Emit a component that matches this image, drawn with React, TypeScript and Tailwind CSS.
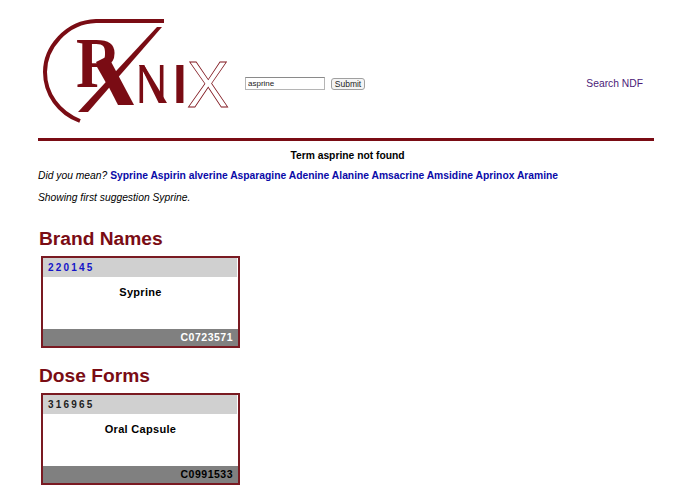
import React from 'react';

const maroon = '#7a0c14';
const serif = { fontFamily: '"Liberation Serif", serif' };
const sans = { fontFamily: '"Liberation Sans", sans-serif' };

const Logo = () => (
  <svg width="200" height="130" viewBox="0 0 200 130" className="shrink-0">
    {/* svg origin sits at page (38,10) */}
    <path d="M126 11 L58 11 C28 12 7 38 7 62 C7 84 21 103 42 111" fill="none" stroke={maroon} strokeWidth="4" />
    <text transform="translate(38 77) scale(0.88 1)" fill={maroon} fontSize="71" fontWeight="700" style={serif}>R</text>
    <polygon points="119,17 124,17 50,102 40,102" fill={maroon} />
    <polygon points="58,52 70,46 96,95 80,95" fill={maroon} />
    <text transform="translate(98 93) scale(0.78 1)" fill={maroon} fontSize="55" style={sans}>N</text>
    <polygon points="101,55 106,55 129,93 125,93" fill={maroon} />
    <text transform="translate(135 93) scale(0.9 1)" fill={maroon} fontSize="55" fontWeight="700" style={sans}>I</text>
    <text transform="translate(149 97) scale(0.97 1)" fill="#ffffff" stroke={maroon} strokeWidth="0.8" fontSize="65" style={sans}>X</text>
  </svg>
);

const Card = ({ id, name, code, idClass, codeClass }: { id: string; name: string; code: string; idClass: string; codeClass: string }) => (
  <div className="ml-[3px] flex h-[92px] w-[199px] flex-col border-2 border-[#7a1a22] bg-white">
    <div className={`mr-[1px] h-[19px] bg-[#d0d0d0] pl-[5px] text-[10px] leading-[19px] font-bold tracking-[2.2px] ${idClass}`}>{id}</div>
    <div className="flex-1 pt-[8px] text-center text-[11px] leading-[14px] font-bold tracking-[0.3px] text-black">{name}</div>
    <div className={`h-[17px] bg-[#808080] pr-[5px] text-right text-[10.5px] leading-[17px] font-bold tracking-[0.5px] ${codeClass}`}>{code}</div>
  </div>
);

const suggestions = ['Syprine', 'Aspirin alverine', 'Asparagine', 'Adenine', 'Alanine', 'Amsacrine', 'Amsidine', 'Aprinox', 'Aramine'];

export default function App() {
  return (
    <div className="h-[494px] w-[695px] overflow-hidden bg-white px-[38px] text-black" style={{ fontFamily: '"Liberation Sans", Arial, sans-serif' }}>
      <div className="flex h-[138px] items-start pt-[10px]">
        <Logo />
        <form className="mt-[67px] ml-[7px] flex items-center" onSubmit={(e) => e.preventDefault()}>
          <input defaultValue="asprine" className="h-[13px] w-[80px] border border-[#b5b5b5] border-t-[#8a8a8a] bg-white px-[2px] text-[8px] text-[#222] outline-none" />
          <button type="button" className="ml-[6px] h-[12px] w-[34px] rounded-[3px] border border-[#a0a0a0] bg-[#f4f4f4] text-[8.5px] leading-[10px] text-[#222]">Submit</button>
        </form>
        <a className="mt-[67px] mr-[14px] ml-auto text-[10.3px] leading-[14px] text-[#4b1a78]">Search NDF</a>
      </div>
      <div className="h-[3px] w-[616px] bg-[#7a0c14]" />
      <p className="mt-[8px] text-center text-[10.3px] leading-[14px] font-bold">Term asprine not found</p>
      <p className="mt-[5px] text-[10.3px] leading-[16px]">
        <i>Did you mean? </i>
        {suggestions.map((s) => (
          <a key={s} className="font-bold text-[#0a0aa8]">{s} </a>
        ))}
      </p>
      <p className="mt-[6px] text-[10.3px] leading-[16px] italic">Showing first suggestion Syprine.</p>
      <h2 className="mt-[21px] ml-[1px] text-[19.2px] leading-[24px] font-bold text-[#7a0c14]">Brand Names</h2>
      <div className="mt-[5px]">
        <Card id="220145" name="Syprine" code="C0723571" idClass="text-[#1414c8]" codeClass="text-white" />
      </div>
      <h2 className="mt-[16px] ml-[1px] text-[19.2px] leading-[24px] font-bold text-[#7a0c14]">Dose Forms</h2>
      <div className="mt-[5px]">
        <Card id="316965" name="Oral Capsule" code="C0991533" idClass="text-[#222]" codeClass="text-black" />
      </div>
    </div>
  );
}
